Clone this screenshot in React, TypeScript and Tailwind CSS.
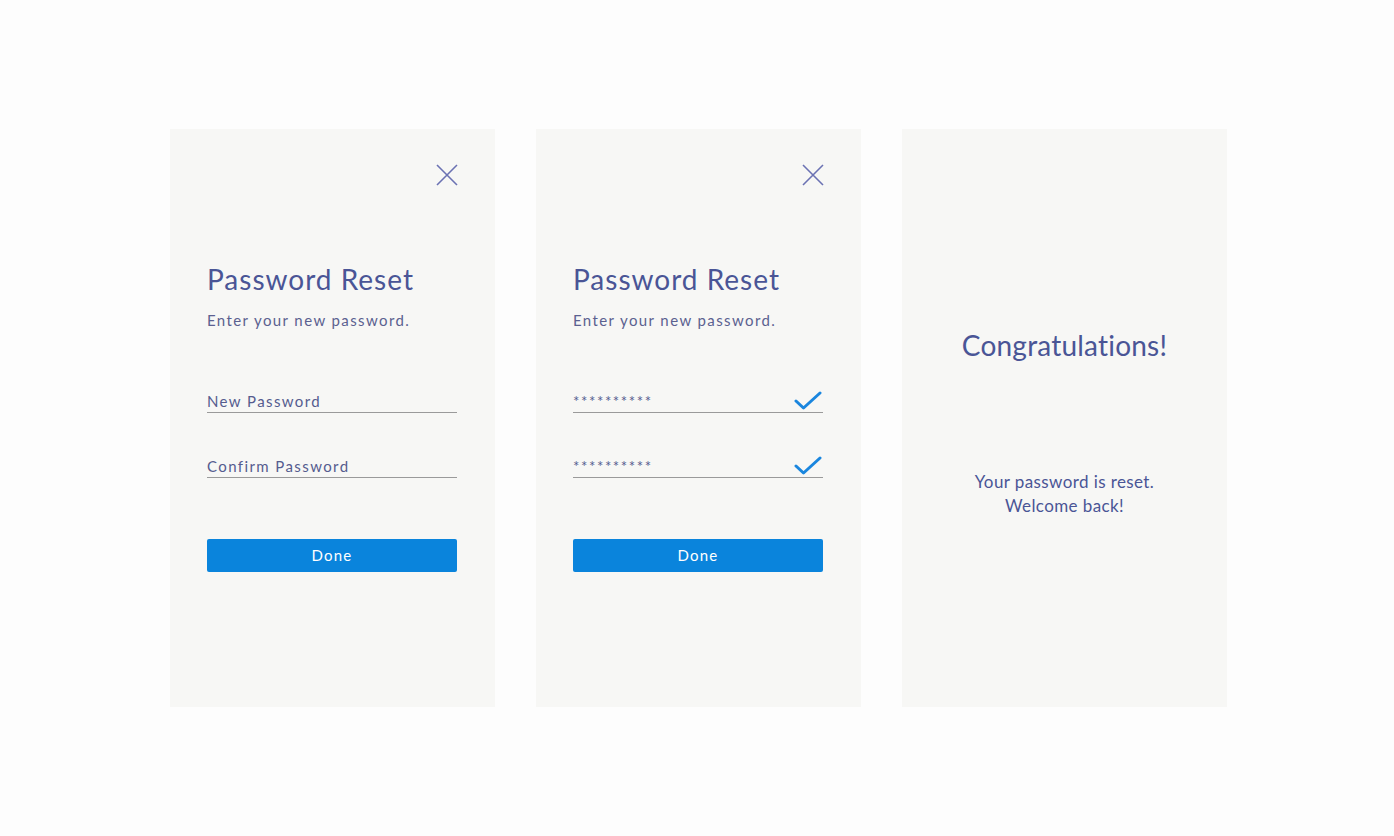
import React from 'react'

const font = { fontFamily: 'Lato, "Noto Sans", sans-serif' }

const CloseIcon = () => (
  <svg width="24" height="24" viewBox="0 0 24 24" className="text-[#6b72b3]">
    <path d="M2 2 L22 22 M22 2 L2 22" stroke="currentColor" strokeWidth="1.6" fill="none" />
  </svg>
)

const CheckIcon = () => (
  <svg width="28" height="20" viewBox="0 0 28 20" className="text-[#1a86de]">
    <path d="M2 10 L9.5 17 L26 2" stroke="currentColor" strokeWidth="3" fill="none" strokeLinecap="round" strokeLinejoin="round" />
  </svg>
)

const Field = ({ text, filled }: { text: string; filled?: boolean }) => (
  <div className="flex items-end justify-between border-b-[1.5px] border-[#9a9a9a] h-[22px]">
    <span
      className={filled ? 'text-[15px] tracking-[1.6px] text-[#555c8f] leading-none pb-[3px]' : 'text-[15px] tracking-[1.4px] text-[#555c8f] leading-none pb-[3px]'}
    >
      {text}
    </span>
    {filled && (
      <span className="mb-[1px] mr-[1px]">
        <CheckIcon />
      </span>
    )}
  </div>
)

const ResetCard = ({ filled }: { filled?: boolean }) => (
  <div className="w-[325px] h-[578px] bg-[#f7f7f5] pl-[37px] pr-[38px] flex flex-col">
    <div className="flex justify-end mt-[34px] -mr-[2px]">
      <CloseIcon />
    </div>
    <h1 className="mt-[75px] text-[28px] leading-[34px] text-[#4a5596] tracking-[1px]">Password Reset</h1>
    <p className="mt-[13px] text-[15px] text-[#5b6190] tracking-[1.4px]">Enter your new password.</p>
    <div className="mt-[59px]">
      <Field text={filled ? '**********' : 'New Password'} filled={filled} />
    </div>
    <div className="mt-[43px]">
      <Field text={filled ? '**********' : 'Confirm Password'} filled={filled} />
    </div>
    <button className="mt-[61px] h-[33px] bg-[#0a84dc] text-white text-[15px] tracking-[1.2px] rounded-[2px]">
      Done
    </button>
  </div>
)

const App = () => {
  return (
    <div className="w-full h-[836px] bg-[#fdfdfd]" style={font}>
      <div className="flex gap-[41px] pl-[170px] pt-[129px]">
        <ResetCard />
        <ResetCard filled />
        <div className="w-[325px] h-[578px] bg-[#f7f7f5] flex flex-col items-center">
          <h2 className="mt-[199px] text-[28px] leading-[34px] text-[#4a5596] tracking-[0.2px]">Congratulations!</h2>
          <div className="mt-[108px] text-center text-[17px] leading-[24px] text-[#4a5596] tracking-[0.4px]">
            <p>Your password is reset.</p>
            <p>Welcome back!</p>
          </div>
        </div>
      </div>
    </div>
  )
}

export default App
